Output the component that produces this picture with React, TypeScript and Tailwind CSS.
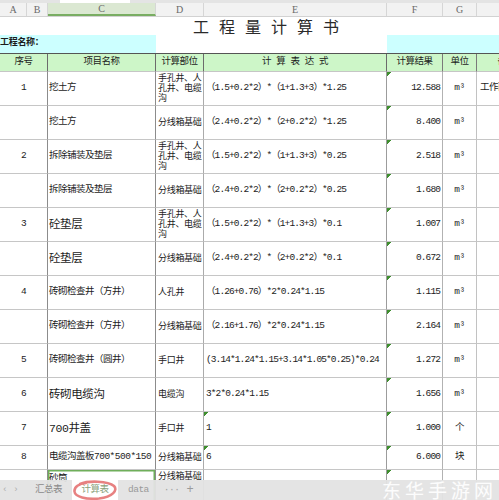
import React from 'react';

type Row = {
  seq?: string;
  name: string;
  big?: boolean;
  part: string[];
  expr: string;
  exprFlag?: boolean;
  result: string;
  unit: string;
  note?: string;
  h?: string;
  selected?: boolean;
};

const wall = ['手孔井、人', '孔井、电缆', '沟'];
const box = ['分线箱基础'];

const rows: Row[] = [
  { seq: '1', name: '挖土方', part: wall, expr: '（1.5+0.2*2）*（1+1.3+3）*1.25', result: '12.588', unit: 'm³', note: '工作面' },
  { name: '挖土方', part: box, expr: '（2.4+0.2*2）*（2+0.2*2）*1.25', result: '8.400', unit: 'm³' },
  { seq: '2', name: '拆除铺装及垫层', part: wall, expr: '（1.5+0.2*2）*（1+1.3+3）*0.25', result: '2.518', unit: 'm³' },
  { name: '拆除铺装及垫层', part: box, expr: '（2.4+0.2*2）*（2+0.2*2）*0.25', result: '1.680', unit: 'm³' },
  { seq: '3', name: '砼垫层', big: true, part: wall, expr: '（1.5+0.2*2）*（1+1.3+3）*0.1', result: '1.007', unit: 'm³' },
  { name: '砼垫层', big: true, part: box, expr: '（2.4+0.2*2）*（2+0.2*2）*0.1', result: '0.672', unit: 'm³' },
  { seq: '4', name: '砖砌检查井（方井）', part: ['人孔井'], expr: '（1.26+0.76）*2*0.24*1.15', result: '1.115', unit: 'm³' },
  { name: '砖砌检查井（方井）', part: box, expr: '（2.16+1.76）*2*0.24*1.15', result: '2.164', unit: 'm³' },
  { seq: '5', name: '砖砌检查井（圆井）', part: ['手口井'], expr: '(3.14*1.24*1.15+3.14*1.05*0.25)*0.24', result: '1.272', unit: 'm³' },
  { seq: '6', name: '砖砌电缆沟', big: true, part: ['电缆沟'], expr: '3*2*0.24*1.15', result: '1.656', unit: 'm³' },
  { seq: '7', name: '700井盖', big: true, part: ['手口井'], expr: '1', exprFlag: true, result: '1.000', unit: '个' },
  { seq: '8', name: '电缆沟盖板700*500*150', part: box, expr: '6', exprFlag: true, result: '6.000', unit: '块', h: 'h-[24px]' },
  { name: '砂筒', part: box, expr: '', result: '', unit: '', selected: true },
];

// green "number stored as text" marker in the top-left corner of a cell
const flag = 'bg-[linear-gradient(135deg,#3f8f2f_3px,transparent_3px)] bg-no-repeat bg-size-[6px_6px]';

const cell = 'h-full shrink-0 flex overflow-hidden whitespace-nowrap border-b border-r border-b-[#c6c6c6]';

const letters = [
  { l: 'A', w: 'w-[27px]' },
  { l: 'B', w: 'w-[21px]' },
  { l: 'C', w: 'w-[108px]', on: true },
  { l: 'D', w: 'w-[48px]' },
  { l: 'E', w: 'w-[183px]' },
  { l: 'F', w: 'w-[56px]' },
  { l: 'G', w: 'w-[34px]' },
  { l: 'H', w: 'w-[60px]' },
];

function DataRow({ r }: { r: Row }) {
  // the last row runs under the sheet tabs, so its text sits at the top
  const v = r.selected ? 'items-start pt-[2px]' : 'items-center';
  return (
    <div className={`flex ${r.h ?? 'h-[34px]'}`}>
      <div className={`${cell} ${v} w-[48px] justify-center border-r-[#8c8c8c]`}>{r.seq}</div>
      <div
        className={`${cell} ${v} w-[108px] pl-[1px] border-r-[#8c8c8c] ${r.big ? 'text-[11.5px] tracking-[-0.4px]' : ''} ${
          r.selected ? 'shadow-[inset_0_0_0_1.5px_#6fae5a]' : ''
        }`}
      >
        {r.name}
      </div>
      <div className={`${cell} ${v} w-[48px] pl-[2px] border-r-[#ababab] text-[9px] tracking-[-0.3px]`}>
        <div className="leading-[10px]">
          {r.part.map((p) => (
            <div key={p}>{p}</div>
          ))}
        </div>
      </div>
      <div className={`${cell} ${v} w-[183px] pl-[2px] border-r-[#9c9c9c] tracking-[-0.9px] ${r.exprFlag ? flag : ''}`}>
        {r.expr}
      </div>
      <div className={`${cell} ${v} w-[56px] justify-end pr-[2px] border-r-[#b2b2b2] tracking-[-0.9px] ${flag}`}>
        {r.result}
      </div>
      <div className={`${cell} ${v} w-[34px] justify-center border-r-[#c2c2c2]`}>{r.unit}</div>
      <div className={`${cell} ${v} w-[60px] pl-[3px] border-r-[#cccccc]`}>{r.note}</div>
    </div>
  );
}

export default function App() {
  return (
    <div className="relative w-[499px] h-[500px] overflow-hidden bg-white text-[#1c1c1c] text-[9.5px] tracking-[-0.5px] font-['Liberation_Mono','Noto_Sans_CJK_SC',monospace]">
      {/* strip left over from the formula bar */}
      <div className="flex h-[3px]">
        <div className="w-[60px] bg-[#e4e4e4]" />
        <div className="w-[70px] bg-white" />
        <div className="flex-1 bg-[#e4e4e4]" />
      </div>

      {/* column letters */}
      <div className="flex h-[14px] w-[537px] bg-[#f2f2f2] border-b border-b-[#d2d2d2] font-['Liberation_Serif',serif] text-[10px] text-[#6a6a6a] tracking-normal">
        {letters.map((c) => (
          <div
            key={c.l}
            className={`${c.w} shrink-0 flex items-center justify-center border-r border-r-[#d6d6d6] ${
              c.on ? 'bg-[#dbe8d2] border-b-2 border-b-[#79ad62]' : ''
            }`}
          >
            {c.l}
          </div>
        ))}
      </div>

      {/* title */}
      <div className="flex h-[18px] pl-[193px] items-end">
        <span className="font-['Noto_Sans_CJK_SC',sans-serif] text-[16px] leading-[18px] tracking-[10px] text-[#2a2a2a]">
          工程量计算书
        </span>
      </div>

      {/* project name */}
      <div className="flex h-[18px] w-[537px]">
        <div className="w-[156px] shrink-0 bg-[#ccffff] flex items-center font-bold text-[9px] tracking-[-0.3px]">
          工程名称：
        </div>
        <div className="w-[231px] shrink-0 bg-white" />
        <div className="w-[150px] shrink-0 bg-[#ccffff]" />
      </div>

      {/* header */}
      <div className="flex h-[19px] w-[537px] bg-[#cdf6c8] border-t border-t-[#555555]">
        <div className={`${cell} items-center w-[48px] justify-center border-r-[#6b6b6b] border-b-[#6b6b6b]`}>序号</div>
        <div className={`${cell} items-center w-[108px] justify-center border-r-[#6b6b6b] border-b-[#6b6b6b]`}>项目名称</div>
        <div className={`${cell} items-center w-[48px] justify-center border-r-[#6b6b6b] border-b-[#6b6b6b]`}>计算部位</div>
        <div className={`${cell} items-center w-[183px] justify-center border-r-[#6b6b6b] border-b-[#6b6b6b]`}>计 算 表 达 式</div>
        <div className={`${cell} items-center w-[56px] justify-center border-r-[#7a7a7a] border-b-[#6b6b6b]`}>计算结果</div>
        <div className={`${cell} items-center w-[34px] justify-center border-r-[#7a7a7a] border-b-[#6b6b6b]`}>单位</div>
        <div className={`${cell} items-center w-[60px] justify-center border-r-[#7a7a7a] border-b-[#6b6b6b]`}>备注</div>
      </div>

      <div className="w-[537px]">
        {rows.map((r, i) => (
          <DataRow key={i} r={r} />
        ))}
      </div>

      {/* sheet tabs */}
      <div className="absolute inset-x-0 bottom-0 h-[20px] flex items-center bg-[#e3e3e3]/95 text-[#8a8a8a] text-[9.5px]">
        <span className="ml-[2px] w-[6px] text-[#b0b0b0]">‹</span>
        <span className="ml-[5px] w-[6px] text-[#b0b0b0]">›</span>
        <span className="ml-[16px]">汇总表</span>
        <div className="relative ml-[10px] w-[46px] h-full bg-white flex items-center justify-center text-[#8ba27c]">
          计算表
          <svg className="absolute inset-0" width="46" height="20" viewBox="0 0 46 20" fill="none">
            <path
              d="M8 4 C16 0.5 36 0.8 42 6 C46 10 41 17 27 18.5 C14 19.5 3 17 2.5 11.5 C2 7 7 3.5 14 3"
              stroke="#e36b6b"
              strokeWidth="2.6"
              strokeLinecap="round"
              opacity="0.85"
            />
          </svg>
        </div>
        <span className="ml-[10px] text-[#9a9a9a]">data</span>
        <span className="ml-[15px] text-[#a0a0a0]">···</span>
        <span className="ml-[7px] text-[12px] text-[#9a9a9a]">+</span>
        <span className="ml-auto mr-[2px] font-['Noto_Sans_CJK_SC',sans-serif] text-[19px] tracking-[4px] text-white/90">
          东华手游网
        </span>
      </div>
    </div>
  );
}
